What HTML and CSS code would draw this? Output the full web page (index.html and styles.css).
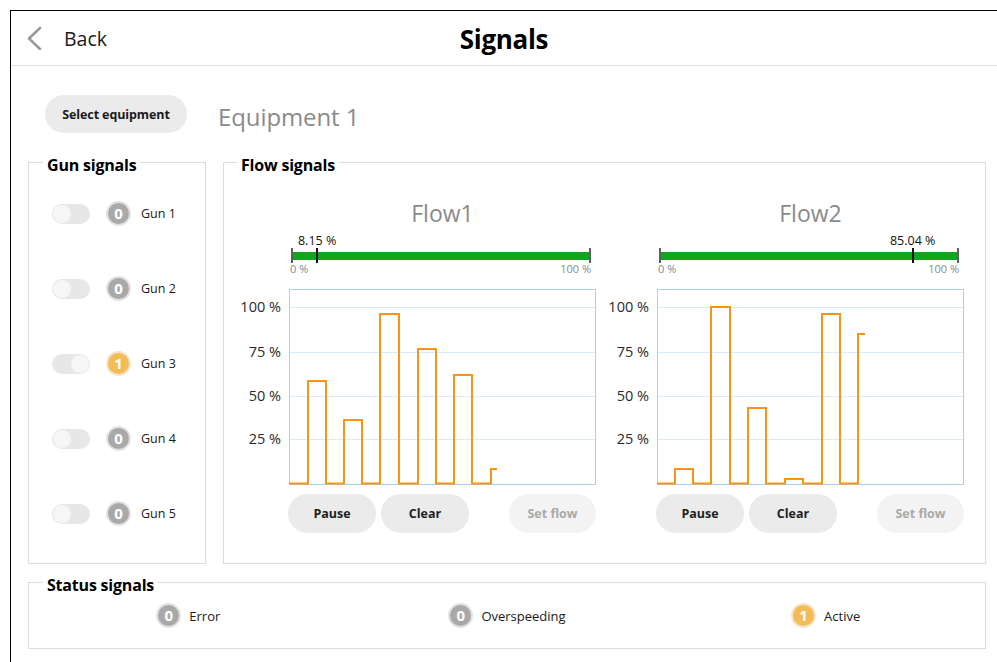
FILE: index.html
```html
<!DOCTYPE html>
<html lang="en">
<head>
<meta charset="utf-8">
<title>Signals</title>
<link rel="stylesheet" href="styles.css">
</head>
<body>
<div class="window">
  <header class="topbar">
    <button class="back" type="button">
      <svg class="back-icon" width="16" height="24" viewBox="0 0 16 24" aria-hidden="true">
        <polyline points="14,2 3,12.5 14,23" fill="none" stroke="#9a9a9a" stroke-width="2.6" stroke-linecap="round" stroke-linejoin="round"/>
      </svg>
      <span>Back</span>
    </button>
    <h1 class="title">Signals</h1>
  </header>

  <main class="content">
    <div class="equipment-row">
      <button class="pill select-btn" type="button">Select equipment</button>
      <span class="equipment-name">Equipment 1</span>
    </div>

    <div class="panels">
      <fieldset class="group gun-group">
        <legend>Gun signals</legend>
        <div class="gun-row"><span class="toggle"></span><span class="badge">0</span><span class="gun-label">Gun 1</span></div>
        <div class="gun-row"><span class="toggle"></span><span class="badge">0</span><span class="gun-label">Gun 2</span></div>
        <div class="gun-row"><span class="toggle on"></span><span class="badge active">1</span><span class="gun-label">Gun 3</span></div>
        <div class="gun-row"><span class="toggle"></span><span class="badge">0</span><span class="gun-label">Gun 4</span></div>
        <div class="gun-row"><span class="toggle"></span><span class="badge">0</span><span class="gun-label">Gun 5</span></div>
      </fieldset>

      <fieldset class="group flow-group">
        <legend>Flow signals</legend>
        <div class="flows">
          <section class="flow">
            <div class="flow-head">
              <h2 class="flow-title">Flow1</h2>
              <div class="meter">
                <span class="meter-value" style="left: 8.15%">8.15 %</span>
                <span class="meter-fill"></span>
                <span class="meter-mark" style="left: 8.15%"></span>
              </div>
              <div class="meter-scale"><span>0 %</span><span>100 %</span></div>
            </div>
            <svg class="chart" width="368" height="196" viewBox="0 0 368 196">
              <text class="axis" x="52" y="23">100 %</text>
              <text class="axis" x="52" y="68">75 %</text>
              <text class="axis" x="52" y="112">50 %</text>
              <text class="axis" x="52" y="155">25 %</text>
              <g transform="translate(60,0)">
                <rect class="plot" x="0.5" y="0.5" width="306" height="195"/>
                <g class="grid">
                  <line x1="1" x2="306" y1="18.5" y2="18.5"/>
                  <line x1="1" x2="306" y1="63.5" y2="63.5"/>
                  <line x1="1" x2="306" y1="107.5" y2="107.5"/>
                  <line x1="1" x2="306" y1="150.5" y2="150.5"/>
                </g>
                <polyline class="trace" points="0,194.5 19,194.5 19,92 37,92 37,194.5 55,194.5 55,131 73,131 73,194.5 91,194.5 91,25 110,25 110,194.5 129,194.5 129,60 147,60 147,194.5 165,194.5 165,86 183,86 183,194.5 202,194.5 202,180 208,180"/>
              </g>
            </svg>
            <div class="flow-actions">
              <button class="pill act" type="button">Pause</button>
              <button class="pill act" type="button">Clear</button>
              <button class="pill act disabled" type="button">Set flow</button>
            </div>
          </section>

          <section class="flow">
            <div class="flow-head">
              <h2 class="flow-title">Flow2</h2>
              <div class="meter">
                <span class="meter-value" style="left: 85.04%">85.04 %</span>
                <span class="meter-fill"></span>
                <span class="meter-mark" style="left: 85.04%"></span>
              </div>
              <div class="meter-scale"><span>0 %</span><span>100 %</span></div>
            </div>
            <svg class="chart" width="368" height="196" viewBox="0 0 368 196">
              <text class="axis" x="52" y="23">100 %</text>
              <text class="axis" x="52" y="68">75 %</text>
              <text class="axis" x="52" y="112">50 %</text>
              <text class="axis" x="52" y="155">25 %</text>
              <g transform="translate(60,0)">
                <rect class="plot" x="0.5" y="0.5" width="306" height="195"/>
                <g class="grid">
                  <line x1="1" x2="306" y1="18.5" y2="18.5"/>
                  <line x1="1" x2="306" y1="63.5" y2="63.5"/>
                  <line x1="1" x2="306" y1="107.5" y2="107.5"/>
                  <line x1="1" x2="306" y1="150.5" y2="150.5"/>
                </g>
                <polyline class="trace" points="0,194.5 18,194.5 18,180 36,180 36,194.5 54,194.5 54,18 73,18 73,194.5 91,194.5 91,119 109,119 109,194.5 128,194.5 128,190 146,190 146,194.5 165,194.5 165,25 183,25 183,194.5 201,194.5 201,45 208,45"/>
              </g>
            </svg>
            <div class="flow-actions">
              <button class="pill act" type="button">Pause</button>
              <button class="pill act" type="button">Clear</button>
              <button class="pill act disabled" type="button">Set flow</button>
            </div>
          </section>
        </div>
      </fieldset>
    </div>

    <fieldset class="group status-group">
      <legend>Status signals</legend>
      <div class="status-row">
        <div class="status-item"><span class="badge">0</span><span>Error</span></div>
        <div class="status-item"><span class="badge">0</span><span>Overspeeding</span></div>
        <div class="status-item"><span class="badge active">1</span><span>Active</span></div>
      </div>
    </fieldset>
  </main>
</div>
</body>
</html>
```

FILE: styles.css
```css
* {
  box-sizing: border-box;
}

html, body {
  margin: 0;
  padding: 0;
  background: #ffffff;
}

body {
  font-family: "Open Sans", "Noto Sans", "Liberation Sans", sans-serif;
  color: #1a1a1a;
  overflow: hidden;
}

button {
  font-family: inherit;
  border: none;
  cursor: pointer;
}

/* outer window frame */
.window {
  margin: 10px 0 0 10px;
  border-top: 1px solid #000;
  border-left: 1px solid #000;
  height: 652px;
  background: #fff;
}

/* top bar */
.topbar {
  height: 55px;
  border-bottom: 1px solid #dedede;
  display: grid;
  grid-template-columns: 1fr auto 1fr;
  align-items: center;
}

.back {
  justify-self: start;
  display: flex;
  align-items: center;
  gap: 22px;
  background: none;
  padding: 0 0 0 15px;
  font-size: 19.5px;
  color: #1a1a1a;
}

.back-icon {
  display: block;
}

.title {
  margin: 2px 0 0 0;
  font-size: 26px;
  font-weight: 700;
  letter-spacing: -0.3px;
  color: #000;
}

/* main area */
.content {
  padding: 29px 11px 0 17px;
}

.equipment-row {
  display: flex;
  align-items: center;
  gap: 31px;
  padding-left: 17px;
}

.pill {
  background: #ebebeb;
  border-radius: 20px;
  font-weight: 700;
  color: #1a1a1a;
}

.select-btn {
  width: 142px;
  height: 38px;
  font-size: 12.5px;
  letter-spacing: -0.1px;
  padding-top: 1px;
}

.equipment-name {
  font-size: 24px;
  margin-top: 4px;
  color: #8a8a8a;
  letter-spacing: -0.1px;
}

.panels {
  display: grid;
  grid-template-columns: 178px 1fr;
  gap: 17px;
  margin-top: 15px;
}

/* grouped boxes */
.group {
  margin: 0;
  border: 1px solid #dcdcdc;
  padding: 0;
  min-width: 0;
}

.group legend {
  margin-left: 14px;
  padding: 6px 4px 0 4px;
  font-size: 16px;
  line-height: 22px;
  font-weight: 700;
  color: #000;
  letter-spacing: -0.2px;
}

/* gun signals */
.gun-group {
  padding: 0 0 12px 0;
}

.gun-row {
  height: 75px;
  display: flex;
  align-items: center;
  padding-left: 23px;
}

.toggle {
  width: 38px;
  height: 20px;
  border-radius: 10px;
  background: #e7e7e7;
  display: flex;
  align-items: center;
  padding: 0 1px;
  margin-right: 16px;
}

.toggle::before {
  content: "";
  width: 18px;
  height: 18px;
  border-radius: 50%;
  background: #f6f6f6;
}

.toggle.on {
  justify-content: flex-end;
}

.badge {
  width: 25px;
  height: 25px;
  border-radius: 50%;
  background: #a9a9a9;
  border: 2px solid #e2e2e2;
  color: #fff;
  font-weight: 700;
  font-size: 15px;
  display: flex;
  align-items: center;
  justify-content: center;
  flex: none;
  line-height: 1;
}

.badge.active {
  background: #f4bc57;
  border-color: #f3e4cc;
}

.gun-label {
  margin-left: 10px;
  font-size: 12.5px;
  color: #1a1a1a;
}

/* flow signals */
.flow-group {
  padding: 22px 0 29px 5px;
}

.flow-group legend {
  margin-left: 8px;
}

.flows {
  display: grid;
  grid-template-columns: 368px 368px;
}

.flow-head {
  margin-left: 60px;
  width: 307px;
}

.flow-title {
  margin: 0;
  text-align: center;
  font-size: 23px;
  line-height: 30px;
  font-weight: 400;
  color: #8a8a8a;
}

.meter {
  position: relative;
  margin: 20px 0 0 2px;
  width: 300px;
  height: 15px;
  border-left: 2px solid #5e5e5e;
  border-right: 2px solid #5e5e5e;
  display: flex;
  align-items: center;
}

.meter-fill {
  flex: 1;
  height: 8px;
  background: #11a51b;
}

.meter-mark {
  position: absolute;
  top: 0;
  width: 2px;
  height: 15px;
  margin-left: -1px;
  background: #111;
}

.meter-value {
  position: absolute;
  bottom: 100%;
  transform: translateX(-50%);
  font-size: 12.5px;
  line-height: 14px;
  color: #111;
  white-space: nowrap;
}

.meter-scale {
  margin-left: 1px;
  width: 301px;
  display: flex;
  justify-content: space-between;
  font-size: 11px;
  line-height: 12px;
  color: #8a8a8a;
}

.chart {
  display: block;
  margin-top: 14px;
}

.chart .axis {
  font-family: "Open Sans", "Noto Sans", sans-serif;
  font-size: 14.5px;
  fill: #2a2a2a;
  text-anchor: end;
}

.chart .plot {
  fill: #fff;
  stroke: #a9d2ea;
  stroke-width: 1;
}

.chart .grid line {
  stroke: #d9ebf6;
  stroke-width: 1;
}

.chart .trace {
  fill: none;
  stroke: #fb9317;
  stroke-width: 2;
  stroke-linejoin: miter;
}

.flow-actions {
  margin: 9px 0 0 59px;
  width: 308px;
  display: flex;
  gap: 5px;
}

.act {
  width: 88px;
  height: 39px;
  font-size: 12.5px;
  color: #1e1e1e;
  padding-top: 1px;
}

.act.disabled {
  margin-left: auto;
  width: 87px;
  background: #f3f3f3;
  color: #a9a9a9;
}

/* status signals */
.status-group {
  margin-top: 4px;
  padding: 7px 0 20px 0;
}

.status-row {
  display: grid;
  grid-template-columns: 1fr 1fr 1fr;
}

.status-item {
  display: flex;
  align-items: center;
  justify-content: center;
  gap: 8px;
  font-size: 13px;
  color: #1a1a1a;
}
```
